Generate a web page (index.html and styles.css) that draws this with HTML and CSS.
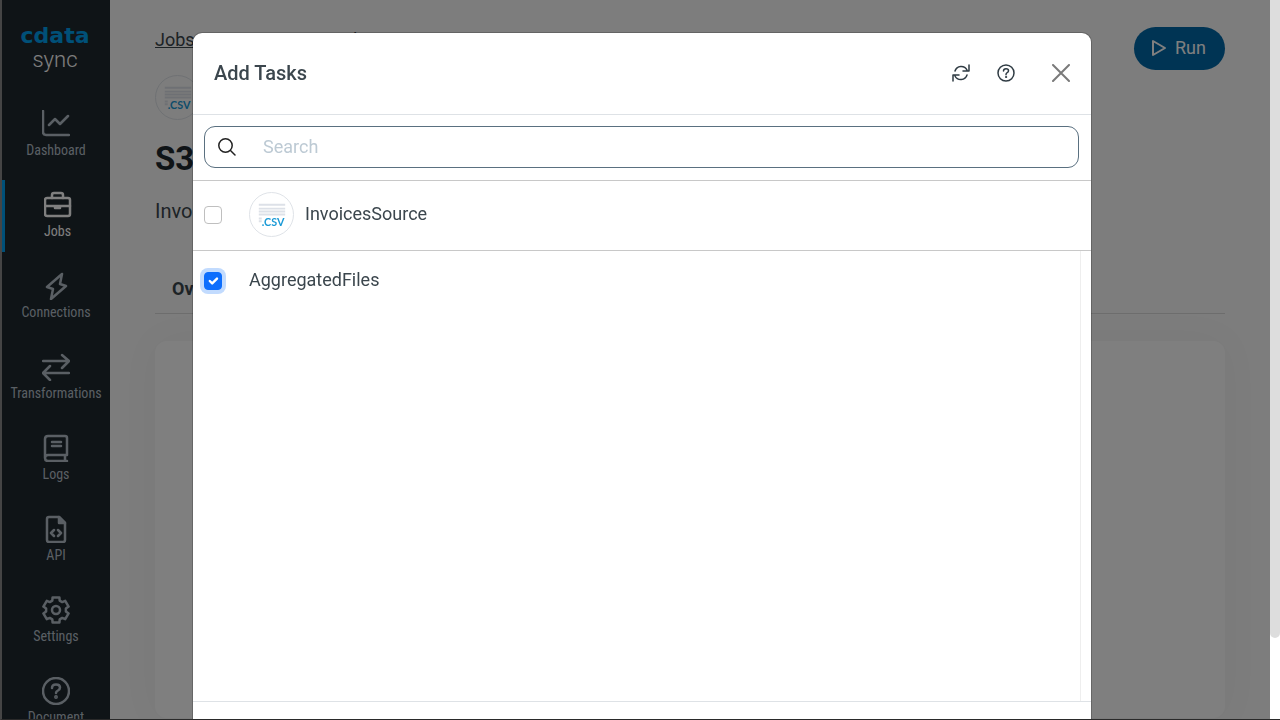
FILE: index.html
```html
<!DOCTYPE html>
<html lang="en">
<head>
    <meta charset="UTF-8">
    <meta name="viewport" content="width=device-width, initial-scale=1.0">
    <title>CData Sync - Add Tasks</title>
    <link rel="stylesheet" href="styles.css">
</head>
<body>
    <div class="app">
        <nav class="sidebar">
            <div class="logo">
                <span class="logo-name">cdata</span>
                <span class="logo-product">sync</span>
            </div>
            <a class="nav-item" href="#">
                <svg viewBox="0 0 28 28"><path d="M1 1v21q0 3 3 3h23M7 15l6-6 5 5 8-8"/></svg>
                Dashboard
            </a>
            <a class="nav-item active" href="#">
                <svg viewBox="0 0 28 28"><rect x="1" y="7" width="25" height="18" rx="2"/><path d="M8 7V4q0-2 2-2h7q2 0 2 2v3M1 15h25"/><path class="solid" d="M11 16h5v1h-5z"/></svg>
                Jobs
            </a>
            <a class="nav-item" href="#">
                <svg viewBox="0 0 28 28"><path d="M20 2L5 15l6 2-2 10 15-13-6-2z"/></svg>
                Connections
            </a>
            <a class="nav-item" href="#">
                <svg viewBox="0 0 28 28"><path d="M1 8h26M20 2l7 6-7 7M27 20H1M8 13l-7 7 7 7"/></svg>
                Transformations
            </a>
            <a class="nav-item" href="#">
                <svg viewBox="0 0 28 28"><path d="M25 21V4q0-2-2-2H6Q3 2 3 5v19q0 3 3 3h19M25 21H6q-3 0-3 3M23 21v6M10 8h9M10 12h9"/></svg>
                Logs
            </a>
            <a class="nav-item" href="#">
                <svg viewBox="0 0 28 28"><path d="M17 2H7Q5 2 5 4v21q0 2 2 2h14q2 0 2-2V8zM12 15l-3 3 3 3M16 15l3 3-3 3"/><path class="solid" d="M17 2v6h6z"/></svg>
                API
            </a>
            <a class="nav-item" href="#">
                <svg viewBox="0 0 28 28"><circle cx="14" cy="14" r="4"/><path d="M10.600 1.400h6.800l.3 3.300 2.500 1.400 3-1.300 3.400 5.800-2.700 2v2.800l2.700 2-3.400 5.800-3-1.300-2.500 1.400-.3 3.300h-6.800l-.3-3.300-2.500-1.400-3 1.300-3.400-5.800 2.700-2v-2.800l-2.700-2 3.400-5.800 3 1.300 2.500-1.400z"/></svg>
                Settings
            </a>
            <a class="nav-item" href="#">
                <svg viewBox="0 0 28 28"><circle cx="14" cy="14" r="13"/><path d="M10 11q0-3.500 4-3.500t4 3q0 2-2 3t-2 2.500"/><circle class="solid" cx="14" cy="20" r=".7"/></svg>
                Document
            </a>
        </nav>

        <main class="page">
            <header class="page-top">
                <div class="breadcrumb">
                    <a href="#">Jobs</a>
                    <span>Sales</span>
                </div>
                <button class="run" type="button">
                    <svg viewBox="0 0 16 18"><path d="M2 2v14l12-7z"/></svg>
                    Run
                </button>
            </header>
            <div class="csv-icon">
                <svg viewBox="0 0 44 44"><path d="M9 12h27M9 16h27M9 19h27M9 22h27M9 26h3M9 29h3"/><text x="12" y="34">.CSV</text></svg>
            </div>
            <h1>S3</h1>
            <p class="source">Invoices</p>
            <div class="tabs"><a href="#">Overview</a></div>
            <section class="card"></section>
        </main>
    </div>

    <div class="backdrop">
        <div class="modal" role="dialog" aria-labelledby="modal-title">
            <header class="modal-header">
                <h2 id="modal-title">Add Tasks</h2>
                <button type="button" class="icon-button" aria-label="Refresh">
                    <svg viewBox="0 0 18 18"><path d="M3 7a6.500 6.500 0 0 1 12-1M17 1v6h-6M15 11a6.500 6.500 0 0 1-12 1M1 17v-6h6"/></svg>
                </button>
                <button type="button" class="icon-button" aria-label="Help">
                    <svg viewBox="0 0 18 18"><circle cx="9" cy="9" r="8"/><path d="M6.500 7q0-2.300 2.500-2.300t2.500 2q0 1.300-1.300 2T9 10.700"/><circle class="dot" cx="9" cy="13" r=".6"/></svg>
                </button>
                <button type="button" class="icon-button close" aria-label="Close">
                    <svg viewBox="0 0 18 18"><path d="M1 1l16 16M17 1L1 17"/></svg>
                </button>
            </header>
            <div class="search">
                <label class="search-box">
                    <svg viewBox="0 0 18 18"><circle cx="7.500" cy="7.500" r="6.700"/><path d="M12.500 12.500L17 17"/></svg>
                    <input type="text" placeholder="Search" aria-label="Search">
                </label>
            </div>
            <label class="row source-row">
                <input type="checkbox">
                <span class="csv-icon">
                    <svg viewBox="0 0 44 44"><path d="M9 12h27M9 16h27M9 19h27M9 22h27M9 26h3M9 29h3"/><text x="12" y="34">.CSV</text></svg>
                </span>
                <span class="row-name">InvoicesSource</span>
            </label>
            <div class="task-list">
                <label class="row">
                    <input type="checkbox" class="focused" checked>
                    <span class="row-name">AggregatedFiles</span>
                </label>
            </div>
            <footer class="modal-footer"></footer>
        </div>
    </div>

    <div class="scrollbar"><div class="thumb"></div></div>
</body>
</html>
```
FILE: styles.css
```css
* {
    box-sizing: border-box;
    margin: 0;
}
body {
    height: 100vh;
    overflow: hidden;
    font-family: Roboto, sans-serif;
    font-size: 18px;
    line-height: 24px;
    color: #3b464d;
    background: #fafafa;
}
svg {
    display: block;
    fill: none;
    stroke: currentColor;
    stroke-linecap: round;
    stroke-linejoin: round;
}
button {
    border: 0;
    font: inherit;
    cursor: pointer;
}

/* page behind the modal */
.app {
    display: flex;
    height: 100vh;
    padding-right: 10px;
    border-left: 2px solid #8a8a8a;
    border-bottom: 1px solid #555;
    overflow: hidden;
}
.sidebar {
    flex: none;
    width: 108px;
    background: #1f292f;
}
.logo {
    display: flex;
    flex-direction: column;
    align-items: center;
    height: 99px;
    padding: 24px 2px 0 0;
}
.logo-name {
    font-family: "DejaVu Sans", sans-serif;
    font-size: 22px;
    font-weight: bold;
    color: #00a0f0;
}
.logo-product {
    font-size: 22px;
    font-weight: 300;
    color: #fff;
}
.nav-item {
    display: flex;
    flex-direction: column;
    align-items: center;
    gap: 2px;
    margin-bottom: 9px;
    padding: 11px 0;
    font-family: "Roboto Condensed", "Liberation Sans Narrow", Roboto, sans-serif;
    font-size: 14px;
    line-height: 20px;
    color: #b4bfc8;
    text-decoration: none;
}
.nav-item svg {
    width: 28px;
    height: 28px;
    stroke-width: 2.5;
}
.nav-item .solid {
    fill: currentColor;
}
.nav-item.active {
    border-left: 3px solid #00a0f0;
    color: #fff;
}
.page {
    flex: 1;
    padding: 27px 45px 0;
}
.page-top {
    display: flex;
    justify-content: space-between;
    height: 48px;
}
.breadcrumb {
    display: flex;
    gap: 138px;
    padding-top: 1px;
}
.breadcrumb a {
    color: inherit;
}
.run {
    display: flex;
    align-items: center;
    gap: 8px;
    height: 43px;
    padding: 0 19px 2px 17px;
    border-radius: 22px;
    color: #fff;
    background: #0068a8;
}
.run svg {
    width: 16px;
    height: 18px;
    stroke-width: 2;
}
.csv-icon {
    width: 45px;
    height: 45px;
    border: 1px solid #dfe3e8;
    border-radius: 50%;
    background: #fff;
}
.page .csv-icon {
    background: none;
}
.csv-icon path {
    stroke: #dde1e8;
    stroke-width: 2;
    stroke-linecap: butt;
}
.csv-icon text {
    fill: #1b9ad6;
    stroke: none;
    font-family: Lato, sans-serif;
    font-size: 11px;
    font-weight: bold;
}
h1 {
    margin-top: 19px;
    font-size: 33px;
    line-height: 40px;
    color: #1f292f;
}
.source {
    margin-top: 20px;
    font-size: 20px;
}
.tabs {
    margin-top: 42px;
    padding: 12px 17px;
    border-bottom: 1px solid #dadada;
}
.tabs a {
    font-weight: bold;
    color: inherit;
    text-decoration: none;
}
.card {
    height: 377px;
    margin-top: 27px;
    border-radius: 12px;
    background: #fff;
    box-shadow: 0 0 40px rgba(0, 0, 0, 0.04);
}

/* modal */
.backdrop {
    position: fixed;
    inset: 0;
    display: flex;
    justify-content: center;
    padding: 32px 0 1px 4px;
    background: rgba(0, 0, 0, 0.5);
}
.modal {
    display: flex;
    flex-direction: column;
    width: 900px;
    max-width: 100%;
    border: 1px solid rgba(0, 0, 0, 0.2);
    border-bottom: 0;
    border-radius: 10px 10px 0 0;
    background: #fff;
    background-clip: padding-box;
}
.modal-header {
    display: flex;
    align-items: center;
    gap: 27px;
    height: 82px;
    padding: 0 21px 2px;
    border-bottom: 1px solid #dee2e6;
}
.modal-header h2 {
    flex: 1;
    font-size: 20px;
    font-weight: 500;
}
.icon-button {
    padding: 0;
    color: #2f3b43;
    background: none;
}
.icon-button svg {
    width: 18px;
    height: 18px;
    stroke-width: 1.5;
}
.icon-button .dot {
    fill: currentColor;
    stroke-width: 1;
}
.icon-button.close {
    margin-left: 10px;
    color: #7a7a7a;
}
.icon-button.close svg {
    stroke-width: 2;
}
.search {
    padding: 11px 12px 12px 11px;
    border-bottom: 1px solid #c8c8c8;
}
.search-box {
    display: flex;
    align-items: center;
    height: 42px;
    padding: 0 13px;
    border: 1px solid #5a7080;
    border-radius: 11px;
}
.search-box svg {
    width: 18px;
    height: 18px;
    color: #222;
    stroke-width: 1.5;
}
.search-box input {
    flex: 1;
    margin-left: 27px;
    padding: 0;
    border: 0;
    outline: 0;
    font: inherit;
    color: inherit;
    background: none;
}
.search-box input::placeholder {
    color: #bdcad4;
}
.row {
    display: flex;
    align-items: center;
    padding: 0 11px;
}
.source-row {
    height: 70px;
    padding-bottom: 2px;
    border-bottom: 1px solid #c8c8c8;
}
.row input {
    appearance: none;
    width: 18px;
    height: 18px;
    margin-right: 27px;
    border: 1px solid #bfbfbf;
    border-radius: 4px;
}
.row input:checked {
    border-color: #0d6efd;
    background: #0d6efd url("data:image/svg+xml,%3Csvg xmlns='http://www.w3.org/2000/svg' viewBox='0 0 20 20'%3E%3Cpath fill='none' stroke='%23fff' stroke-linecap='round' stroke-linejoin='round' stroke-width='3' d='m6 10 3 3 6-6'/%3E%3C/svg%3E") center / contain no-repeat;
}
.row input.focused {
    box-shadow: 0 0 0 4px #c2dbfe;
}
.row .csv-icon {
    margin-right: 11px;
}
.row-name {
    padding-bottom: 2px;
}
.task-list {
    flex: 1;
    margin-right: 10px;
    border-right: 1px solid #eee;
}
.task-list .row {
    height: 60px;
}
.modal-footer {
    height: 18px;
    border-top: 1px solid #dee2e6;
}

/* window scrollbar */
.scrollbar {
    position: fixed;
    top: 0;
    right: 0;
    bottom: 1px;
    width: 10px;
    background: #fff;
}
.thumb {
    height: 638px;
    border-radius: 0 0 5px 5px;
    background: #ddd;
}
```
